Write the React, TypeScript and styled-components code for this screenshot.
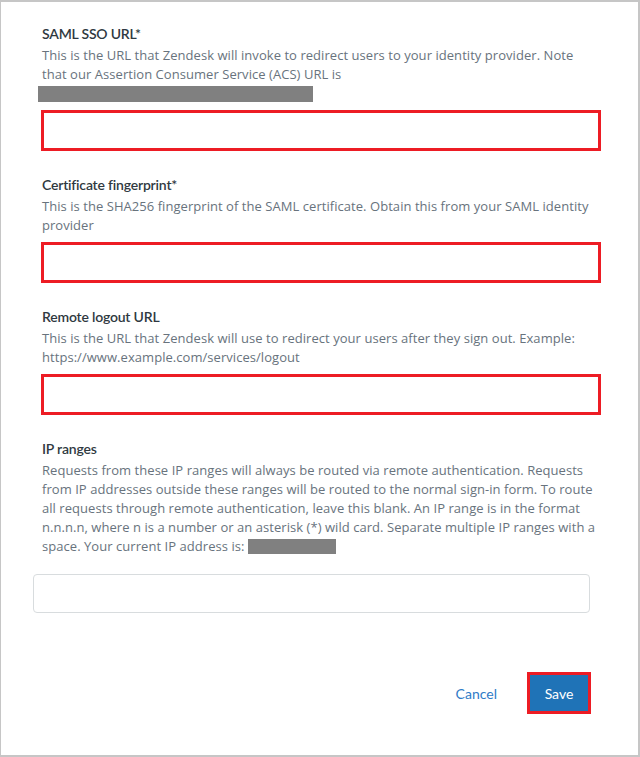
import styled, { createGlobalStyle } from 'styled-components'

const GlobalStyle = createGlobalStyle`
  html, body {
    margin: 0;
    padding: 0;
    background: #ffffff;
  }
  * {
    box-sizing: border-box;
  }
`

const Frame = styled.div`
  width: 640px;
  height: 757px;
  border: 1px solid #c6c6c6;
  border-top-width: 2px;
  border-right-width: 2px;
  border-bottom-width: 2px;
  background: #ffffff;
  padding: 22px 0 0 40px;
  font-family: Lato, 'Open Sans', sans-serif;
  display: flex;
  flex-direction: column;
`

const Field = styled.div`
  display: flex;
  flex-direction: column;
  margin-bottom: 24px;
`

const Label = styled.div`
  margin-left: 1px;
  font-size: 14px;
  line-height: 20px;
  font-weight: 600;
  color: #2f3941;
  letter-spacing: -0.2px;
`

const Hint = styled.div`
  margin: 2px 0 0 1px;
  width: 556px;
  font-family: 'Open Sans', sans-serif;
  font-size: 13px;
  line-height: 19px;
  letter-spacing: 0.05px;
  color: #68737d;
`

const Redacted = styled.span<{ $w: number; $h: number }>`
  display: inline-block;
  width: ${({ $w }) => $w}px;
  height: ${({ $h }) => $h}px;
  background: #808080;
  vertical-align: -3px;
`

const RedactedLine = styled(Redacted)`
  display: block;
  margin: 2px 0 1px -3px;
`

const MarkedInput = styled.input`
  display: block;
  margin-top: 7px;
  width: 560px;
  height: 41px;
  border: 3px solid #ed1c24;
  background: #ffffff;
  outline: none;
`

const PlainInput = styled.input`
  display: block;
  margin: 18px 0 0 -8px;
  width: 557px;
  height: 39px;
  border: 1px solid #d8dcde;
  border-radius: 4px;
  background: #ffffff;
  outline: none;
`

const Footer = styled.div`
  display: flex;
  align-items: center;
  justify-content: flex-end;
  gap: 30px;
  margin-top: 35px;
  padding-right: 47px;
`

const CancelLink = styled.button`
  border: none;
  background: none;
  padding: 0;
  font-family: inherit;
  font-size: 14px;
  color: #2f7bc7;
  cursor: pointer;
`

const SaveButton = styled.button`
  width: 64px;
  height: 42px;
  border: 3px solid #ed1c24;
  background: #1f73b7;
  color: #ffffff;
  font-family: inherit;
  font-size: 14px;
  cursor: pointer;
`

const fields = [
  {
    label: 'SAML SSO URL*',
    hint: 'This is the URL that Zendesk will invoke to redirect users to your identity provider. Note that our Assertion Consumer Service (ACS) URL is',
    redacted: true
  },
  {
    label: 'Certificate fingerprint*',
    hint: 'This is the SHA256 fingerprint of the SAML certificate. Obtain this from your SAML identity provider'
  },
  {
    label: 'Remote logout URL',
    hint: 'This is the URL that Zendesk will use to redirect your users after they sign out. Example: https://www.example.com/services/logout'
  }
]

const App = () => {
  return (
    <>
      <GlobalStyle />
      <Frame>
        {fields.map((field) => (
          <Field key={field.label}>
            <Label>{field.label}</Label>
            <Hint>{field.hint}</Hint>
            {field.redacted && <RedactedLine $w={275} $h={16} />}
            <MarkedInput type="text" />
          </Field>
        ))}
        <Field>
          <Label>IP ranges</Label>
          <Hint>
            Requests from these IP ranges will always be routed via remote
            authentication. Requests from IP addresses outside these ranges will
            be routed to the normal sign-in form. To route all requests through
            remote authentication, leave this blank. An IP range is in the format
            n.n.n.n, where n is a number or an asterisk (*) wild card. Separate
            multiple IP ranges with a space. Your current IP address is:{' '}
            <Redacted $w={88} $h={15} />
          </Hint>
          <PlainInput type="text" />
        </Field>
        <Footer>
          <CancelLink>Cancel</CancelLink>
          <SaveButton>Save</SaveButton>
        </Footer>
      </Frame>
    </>
  )
}

export default App
